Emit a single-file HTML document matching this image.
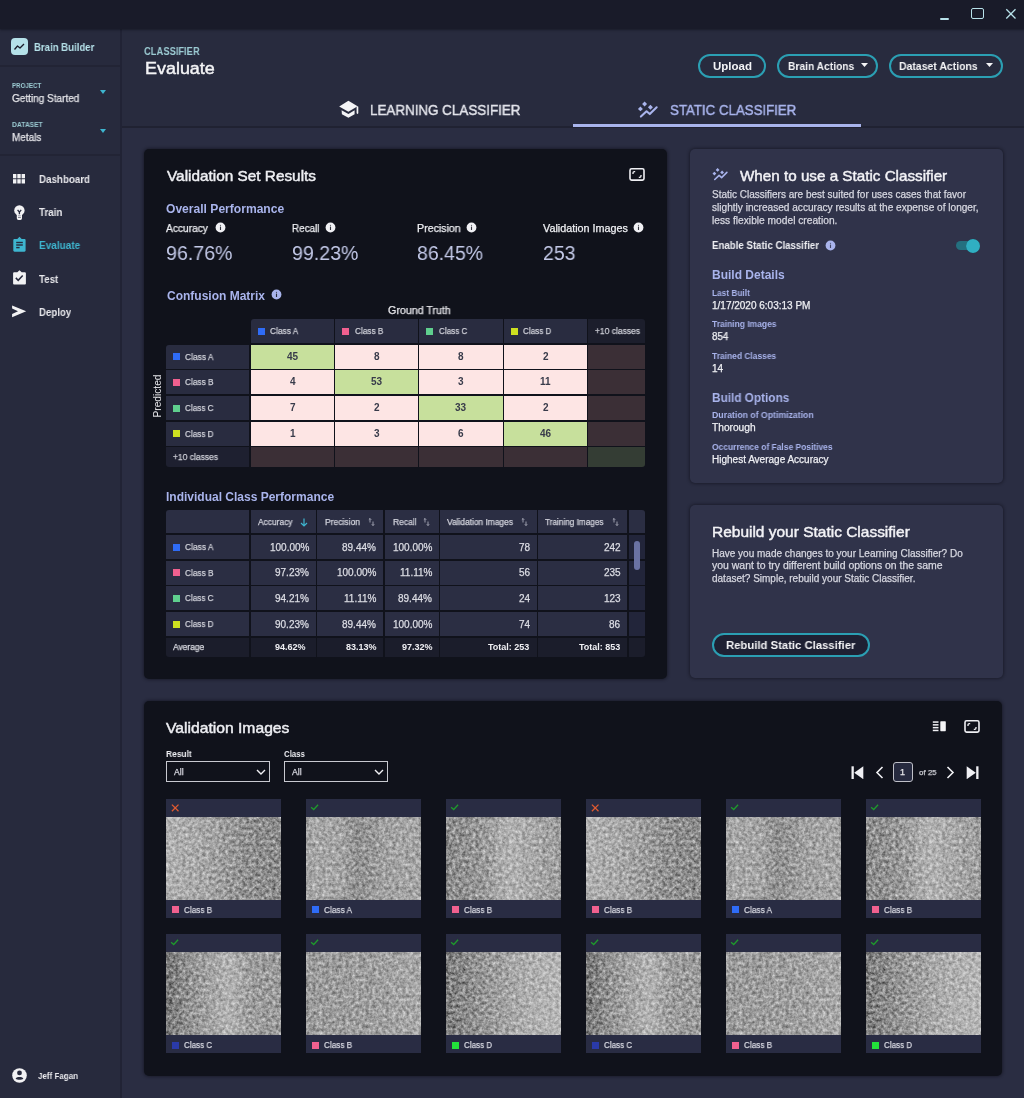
<!DOCTYPE html>
<html><head><meta charset="utf-8">
<style>
*{margin:0;padding:0;box-sizing:border-box}
html,body{width:1024px;height:1098px;overflow:hidden;background:#2a2d42}
body{position:relative;font-family:"Liberation Sans",sans-serif}
body>div,body>svg{position:absolute}
.t{white-space:nowrap;will-change:transform}
.r{-webkit-text-stroke:0.25px currentColor}
</style></head><body>
<div style="left:0px;top:28px;width:120px;height:1070px;background:#272a3d;"></div>
<div style="left:120px;top:28px;width:2px;height:1070px;background:#212335;"></div>
<div style="left:122px;top:28px;width:902px;height:98px;background:#282b3e;"></div>
<div style="left:122px;top:126px;width:902px;height:972px;background:#2a2d42;"></div>
<div style="left:122px;top:126px;width:902px;height:1.6px;background:#202232;"></div>
<div style="left:0px;top:0px;width:1024px;height:28.5px;background:#191b29;box-shadow:0 0 2px 0.5px rgba(10,12,20,0.5);"></div>
<div style="left:0px;top:65px;width:120px;height:2px;background:#222435;"></div>
<div style="left:0px;top:154px;width:120px;height:2px;background:#222435;"></div>
<div style="left:940.2px;top:18.2px;width:8.6px;height:1.6px;background:#b8e2ea;border-radius:1px;"></div>
<div style="left:971.3px;top:8.1px;width:12.4px;height:11.3px;background:transparent;border:1.4px solid #b8e2ea;border-radius:2px;"></div>
<svg style="left:1005px;top:8px;" width="12" height="12" viewBox="0 0 12 12"><path d="M1.3 1.3L10.5 10.5M10.5 1.3L1.3 10.5" stroke="#b8e2ea" stroke-width="1.3"/></svg>
<div style="left:11px;top:38px;width:17px;height:17px;background:#b5e1e9;border-radius:4px;"></div>
<svg style="left:11px;top:38px;" width="17" height="17" viewBox="0 0 17 17"><path d="M3.5 11.5L6.5 8L9 10L13 6" fill="none" stroke="#1a1c2a" stroke-width="1.3" stroke-linejoin="round"/></svg>
<div class="t" style="left:34.00px;top:42.07px;font-size:10.9px;line-height:10.9px;color:#b5e1e9;font-weight:700;transform:scaleX(0.8817);transform-origin:left;">Brain Builder</div>
<div class="t" style="left:11.70px;top:82.96px;font-size:6.9px;line-height:6.9px;color:#9ccbd3;font-weight:700;transform:scaleX(0.9002);transform-origin:left;">PROJECT</div>
<div class="t r" style="left:11.70px;top:93.03px;font-size:10.6px;line-height:10.6px;color:#e6e6ea;font-weight:400;transform:scaleX(0.9458);transform-origin:left;">Getting Started</div>
<svg style="left:100px;top:90px;" width="6" height="4.5" viewBox="0 0 6 4.5"><path d="M0 0H6L3 4Z" fill="#3eb5cf"/></svg>
<div class="t" style="left:11.70px;top:121.66px;font-size:6.9px;line-height:6.9px;color:#9ccbd3;font-weight:700;transform:scaleX(0.9741);transform-origin:left;">DATASET</div>
<div class="t r" style="left:11.70px;top:131.53px;font-size:10.6px;line-height:10.6px;color:#e6e6ea;font-weight:400;transform:scaleX(0.9390);transform-origin:left;">Metals</div>
<svg style="left:100px;top:129px;" width="6" height="4.5" viewBox="0 0 6 4.5"><path d="M0 0H6L3 4Z" fill="#3eb5cf"/></svg>
<div class="t" style="left:39.00px;top:173.94px;font-size:10.7px;line-height:10.7px;color:#e8e8ec;font-weight:700;transform:scaleX(0.9135);transform-origin:left;">Dashboard</div>
<div class="t" style="left:39.00px;top:207.14px;font-size:10.7px;line-height:10.7px;color:#e8e8ec;font-weight:700;transform:scaleX(0.9160);transform-origin:left;">Train</div>
<div class="t" style="left:39.00px;top:240.34px;font-size:10.7px;line-height:10.7px;color:#3eb5cf;font-weight:700;transform:scaleX(0.9370);transform-origin:left;">Evaluate</div>
<div class="t" style="left:39.00px;top:273.84px;font-size:10.7px;line-height:10.7px;color:#e8e8ec;font-weight:700;transform:scaleX(0.9109);transform-origin:left;">Test</div>
<div class="t" style="left:39.00px;top:306.94px;font-size:10.7px;line-height:10.7px;color:#e8e8ec;font-weight:700;transform:scaleX(0.9007);transform-origin:left;">Deploy</div>
<svg style="left:13px;top:174px;" width="13" height="10" viewBox="0 0 13 10"><rect x="0.0" y="0.0" width="3.4" height="4.3" fill="#f2f2f4"/><rect x="4.3" y="0.0" width="3.4" height="4.3" fill="#f2f2f4"/><rect x="8.6" y="0.0" width="3.4" height="4.3" fill="#f2f2f4"/><rect x="0.0" y="5.2" width="3.4" height="4.3" fill="#f2f2f4"/><rect x="4.3" y="5.2" width="3.4" height="4.3" fill="#f2f2f4"/><rect x="8.6" y="5.2" width="3.4" height="4.3" fill="#f2f2f4"/></svg>
<svg style="left:13px;top:204.7px;" width="13" height="16" viewBox="0 0 13 16"><circle cx="6.4" cy="5.4" r="5.2" fill="#f2f2f4"/><path d="M3.2 8.6H9.6L9 10V13.3Q9 14.9 7.4 14.9H5.4Q3.8 14.9 3.8 13.3V10Z" fill="#f2f2f4"/><path d="M4.6 4.9L6.4 7.1L8.2 4.9M6.4 7.1V9.3" stroke="#272a3d" stroke-width="1.3" fill="none"/><rect x="5" y="10.4" width="2.8" height="0.7" fill="#8a8c99"/><rect x="5" y="11.9" width="2.8" height="0.9" fill="#6a6c79"/></svg>
<svg style="left:12px;top:235px;" width="16" height="18" viewBox="0 0 16 18"><path d="M2.5 4H5.3L7.5 1.8L9.7 4H12.5C13.1 4 13.6 4.5 13.6 5.1V15.6C13.6 16.2 13.1 16.7 12.5 16.7H2.5C1.9 16.7 1.3 16.2 1.3 15.6V5.1C1.3 4.5 1.9 4 2.5 4Z" fill="#3eb5cf"/><rect x="4.2" y="6.8" width="6.6" height="1.4" fill="#272a3d"/><rect x="4.2" y="9.3" width="6.6" height="1.4" fill="#272a3d"/><rect x="4.2" y="11.9" width="3.4" height="1.4" fill="#272a3d"/></svg>
<svg style="left:12px;top:269px;" width="16" height="18" viewBox="0 0 16 18"><path d="M2.3 3.2H5.3L7.5 1.2L9.7 3.2H12.7C13.3 3.2 13.9 3.7 13.9 4.3V14.4C13.9 15 13.3 15.5 12.7 15.5H2.3C1.7 15.5 1.1 15 1.1 14.4V4.3C1.1 3.7 1.7 3.2 2.3 3.2Z" fill="#f2f2f4"/><path d="M3.8 8.9L6.2 11.3L10.7 6.4" stroke="#272a3d" stroke-width="1.5" fill="none"/></svg>
<svg style="left:11px;top:304px;" width="16" height="14" viewBox="0 0 16 14"><path d="M1.1 1.6L15.2 7.2L1.1 13.2V9.9L7 7.2L1.1 4.6Z" fill="#f2f2f4"/></svg>
<svg style="left:12px;top:1068px;" width="15" height="15" viewBox="0 0 15 15"><circle cx="7.5" cy="7.5" r="7.3" fill="#f2f2f4"/><circle cx="7.5" cy="4.9" r="2.4" fill="#282b3e"/><path d="M3.6 10.4C4.6 9.3 5.9 9 7.5 9C9.1 9 10.4 9.3 11.4 10.4C10.4 11.5 9.1 11.8 7.5 11.8C5.9 11.8 4.6 11.5 3.6 10.4Z" fill="#282b3e"/></svg>
<div class="t" style="left:38.10px;top:1070.71px;font-size:9.5px;line-height:9.5px;color:#e8e8ec;font-weight:700;transform:scaleX(0.8418);transform-origin:left;">Jeff Fagan</div>
<div class="t" style="left:144.00px;top:45.57px;font-size:10.9px;line-height:10.9px;color:#9ccbd3;font-weight:700;transform:scaleX(0.8602);transform-origin:left;">CLASSIFIER</div>
<div class="t r" style="left:144.60px;top:60.44px;font-size:17.2px;line-height:17.2px;color:#f4f4f6;font-weight:400;transform:scaleX(1.0435);transform-origin:left;-webkit-text-stroke:0.45px currentColor;">Evaluate</div>
<div style="left:698px;top:54px;width:68px;height:24px;background:transparent;border:2px solid #2b9fb3;border-radius:12.0px;"></div>
<div class="t" style="left:712.50px;top:60.65px;font-size:11.4px;line-height:11.4px;color:#f4f4f6;font-weight:700;transform:scaleX(1.0101);transform-origin:left;">Upload</div>
<div style="left:777px;top:54px;width:101px;height:24px;background:transparent;border:2px solid #2b9fb3;border-radius:12.0px;"></div>
<div class="t" style="left:787.50px;top:60.65px;font-size:11.4px;line-height:11.4px;color:#f4f4f6;font-weight:700;transform:scaleX(0.8996);transform-origin:left;">Brain Actions</div>
<svg style="left:861px;top:63.3px;" width="7" height="4.5" viewBox="0 0 7 4.5"><path d="M0 0H7L3.5 4Z" fill="#f4f4f6"/></svg>
<div style="left:889px;top:54px;width:114px;height:24px;background:transparent;border:2px solid #2b9fb3;border-radius:12.0px;"></div>
<div class="t" style="left:899.40px;top:60.65px;font-size:11.4px;line-height:11.4px;color:#f4f4f6;font-weight:700;transform:scaleX(0.9186);transform-origin:left;">Dataset Actions</div>
<svg style="left:986px;top:63.3px;" width="7" height="4.5" viewBox="0 0 7 4.5"><path d="M0 0H7L3.5 4Z" fill="#f4f4f6"/></svg>
<div style="left:573px;top:124px;width:288px;height:3px;background:#a9b4ec;"></div>
<div class="t r" style="left:370.30px;top:102.33px;font-size:15.2px;line-height:15.2px;color:#e2e3ea;font-weight:400;transform:scaleX(0.8822);transform-origin:left;-webkit-text-stroke:0.45px currentColor;">LEARNING CLASSIFIER</div>
<svg style="left:334px;top:96px;" width="28" height="24" viewBox="0 0 28 24"><path d="M14.4 4.7L23.6 10.3L14.4 15.7L5.2 10.4Z" fill="#f4f4f6"/><rect x="22.6" y="10.3" width="1.7" height="7.6" rx="0.8" fill="#f4f4f6"/><path d="M7.6 14.3L14.4 18.1L20.6 14.3V18.3L14.4 21.7L7.9 18.3Z" fill="#f4f4f6"/></svg>
<div class="t r" style="left:670.40px;top:102.33px;font-size:15.2px;line-height:15.2px;color:#a9b4ec;font-weight:400;transform:scaleX(0.8735);transform-origin:left;-webkit-text-stroke:0.45px currentColor;">STATIC CLASSIFIER</div>
<svg style="left:636.2px;top:98.6px;" width="28" height="24" viewBox="0 0 28 24"><g transform="scale(1.3)"><path d="M3.75 13.5L8.1 9.4L10.6 11.6L15.9 6.4" fill="none" stroke="#a9b4ec" stroke-width="1.6" stroke-linecap="round" stroke-linejoin="round"/><path d="M3.4 5.699999999999999L5.3 7.6L3.4 9.5L1.5 7.6ZM6.6 2.0L8.5 3.9L6.6 5.8L4.699999999999999 3.9ZM11.1 4.5L13.0 6.4L11.1 8.3L9.2 6.4Z" fill="#a9b4ec"/></g></svg>
<div style="left:144px;top:149px;width:523px;height:530px;background:#10121b;border-radius:5px;box-shadow:0 0 3px 1px rgba(10,12,20,0.45);"></div>
<div style="left:690px;top:149px;width:313px;height:334px;background:#30334a;border-radius:5px;box-shadow:0 0 3px 1px rgba(10,12,20,0.45);"></div>
<div style="left:690px;top:505px;width:313px;height:173px;background:#30334a;border-radius:5px;box-shadow:0 0 3px 1px rgba(10,12,20,0.45);"></div>
<div style="left:144px;top:701px;width:858px;height:375px;background:#10121b;border-radius:5px;box-shadow:0 0 3px 1px rgba(10,12,20,0.45);"></div>
<div class="t r" style="left:166.80px;top:169.01px;font-size:14.4px;line-height:14.4px;color:#eeeff3;font-weight:400;transform:scaleX(1.0664);transform-origin:left;-webkit-text-stroke:0.45px currentColor;">Validation Set Results</div>
<svg style="left:628px;top:167px;" width="18" height="16" viewBox="0 0 18 16"><rect x="2" y="1.8" width="14" height="11.3" rx="1.6" fill="none" stroke="#f0f0f4" stroke-width="1.6"/><path d="M5 7V5.8Q5 4.6 6.4 4.6H7.2M13 7.9V9.1Q13 10.3 11.6 10.3H10.8" fill="none" stroke="#f0f0f4" stroke-width="1.3"/></svg>
<div class="t" style="left:166.40px;top:203.14px;font-size:12px;line-height:12px;color:#a9b4ec;font-weight:700;transform:scaleX(1.0068);transform-origin:left;">Overall Performance</div>
<div class="t r" style="left:166.40px;top:222.69px;font-size:10.7px;line-height:10.7px;color:#eeeff3;font-weight:400;transform:scaleX(0.9556);transform-origin:left;">Accuracy</div>
<svg style="left:214.7px;top:222.10000000000002px;" width="12" height="12" viewBox="0 0 12 12"><circle cx="5.5" cy="5.5" r="4.9" fill="#f0f0f4"/><rect x="4.95" y="4.6" width="1.1" height="3.4" rx="0.3" fill="#10121b" opacity="0.85"/><circle cx="5.5" cy="3.3" r="0.6" fill="#10121b" opacity="0.7"/></svg>
<div class="t" style="left:166.40px;top:242.75px;font-size:20.5px;line-height:20.5px;color:#c3c9e8;font-weight:400;transform:scaleX(0.9564);transform-origin:left;">96.76%</div>
<div class="t r" style="left:291.80px;top:222.69px;font-size:10.7px;line-height:10.7px;color:#eeeff3;font-weight:400;transform:scaleX(0.9225);transform-origin:left;">Recall</div>
<svg style="left:325px;top:222.10000000000002px;" width="12" height="12" viewBox="0 0 12 12"><circle cx="5.5" cy="5.5" r="4.9" fill="#f0f0f4"/><rect x="4.95" y="4.6" width="1.1" height="3.4" rx="0.3" fill="#10121b" opacity="0.85"/><circle cx="5.5" cy="3.3" r="0.6" fill="#10121b" opacity="0.7"/></svg>
<div class="t" style="left:291.80px;top:242.75px;font-size:20.5px;line-height:20.5px;color:#c3c9e8;font-weight:400;transform:scaleX(0.9550);transform-origin:left;">99.23%</div>
<div class="t r" style="left:417.30px;top:222.69px;font-size:10.7px;line-height:10.7px;color:#eeeff3;font-weight:400;transform:scaleX(0.9916);transform-origin:left;">Precision</div>
<svg style="left:466.3px;top:222.10000000000002px;" width="12" height="12" viewBox="0 0 12 12"><circle cx="5.5" cy="5.5" r="4.9" fill="#f0f0f4"/><rect x="4.95" y="4.6" width="1.1" height="3.4" rx="0.3" fill="#10121b" opacity="0.85"/><circle cx="5.5" cy="3.3" r="0.6" fill="#10121b" opacity="0.7"/></svg>
<div class="t" style="left:417.30px;top:242.75px;font-size:20.5px;line-height:20.5px;color:#c3c9e8;font-weight:400;transform:scaleX(0.9492);transform-origin:left;">86.45%</div>
<div class="t r" style="left:542.70px;top:222.69px;font-size:10.7px;line-height:10.7px;color:#eeeff3;font-weight:400;transform:scaleX(1.0098);transform-origin:left;">Validation Images</div>
<svg style="left:633.1px;top:222.10000000000002px;" width="12" height="12" viewBox="0 0 12 12"><circle cx="5.5" cy="5.5" r="4.9" fill="#f0f0f4"/><rect x="4.95" y="4.6" width="1.1" height="3.4" rx="0.3" fill="#10121b" opacity="0.85"/><circle cx="5.5" cy="3.3" r="0.6" fill="#10121b" opacity="0.7"/></svg>
<div class="t" style="left:542.70px;top:242.75px;font-size:20.5px;line-height:20.5px;color:#c3c9e8;font-weight:400;transform:scaleX(0.9498);transform-origin:left;">253</div>
<div class="t" style="left:166.80px;top:289.54px;font-size:12px;line-height:12px;color:#a9b4ec;font-weight:700;">Confusion Matrix</div>
<svg style="left:270.7px;top:289.1px;" width="12" height="12" viewBox="0 0 12 12"><circle cx="5.5" cy="5.5" r="4.9" fill="#a9b4ec"/><rect x="4.95" y="4.6" width="1.1" height="3.4" rx="0.3" fill="#10121b" opacity="0.85"/><circle cx="5.5" cy="3.3" r="0.6" fill="#10121b" opacity="0.7"/></svg>
<div class="t r" style="left:387.80px;top:304.96px;font-size:10.8px;line-height:10.8px;color:#e6e6ea;font-weight:400;transform:scaleX(0.9886);transform-origin:left;">Ground Truth</div>
<div class="t" style="left:133.5px;top:389.5px;width:48px;height:12px;font-size:10.2px;line-height:12px;color:#e6e6ea;transform:rotate(-90deg);text-align:center">Predicted</div>
<div style="left:251px;top:319.3px;width:83px;height:24px;background:#292c40;border-radius:3px 0 0 0;"></div>
<div style="left:258px;top:328.4px;width:7px;height:6.8px;background:#2f6cf6;"></div>
<div class="t r" style="left:270.30px;top:327.01px;font-size:9.2px;line-height:9.2px;color:#cfd0d8;font-weight:400;transform:scaleX(0.9083);transform-origin:left;">Class A</div>
<div style="left:335.2px;top:319.3px;width:83.0px;height:24px;background:#292c40;"></div>
<div style="left:342.2px;top:328.4px;width:7px;height:6.8px;background:#f0608f;"></div>
<div class="t r" style="left:354.50px;top:327.01px;font-size:9.2px;line-height:9.2px;color:#cfd0d8;font-weight:400;transform:scaleX(0.8940);transform-origin:left;">Class B</div>
<div style="left:419.3px;top:319.3px;width:83.5px;height:24px;background:#292c40;"></div>
<div style="left:426.3px;top:328.4px;width:7px;height:6.8px;background:#5fcf8e;"></div>
<div class="t r" style="left:438.60px;top:327.01px;font-size:9.2px;line-height:9.2px;color:#cfd0d8;font-weight:400;transform:scaleX(0.8797);transform-origin:left;">Class C</div>
<div style="left:504.1px;top:319.3px;width:82.89999999999998px;height:24px;background:#292c40;"></div>
<div style="left:511.1px;top:328.4px;width:7px;height:6.8px;background:#cde020;"></div>
<div class="t r" style="left:523.40px;top:327.01px;font-size:9.2px;line-height:9.2px;color:#cfd0d8;font-weight:400;transform:scaleX(0.8797);transform-origin:left;">Class D</div>
<div style="left:588.3px;top:319.3px;width:57.1px;height:24px;background:#1c1e2c;border-radius:0 3px 0 0;"></div>
<div class="t r" style="left:594.80px;top:327.01px;font-size:9.2px;line-height:9.2px;color:#cfd0d8;font-weight:400;transform:scaleX(0.9225);transform-origin:left;">+10 classes</div>
<div style="left:166.3px;top:344.9px;width:82.5px;height:24.1px;background:#292c40;border-radius:3px 0 0 0;"></div>
<div style="left:172.9px;top:353.4px;width:7.2px;height:7px;background:#2f6cf6;"></div>
<div class="t r" style="left:185.30px;top:352.71px;font-size:9.2px;line-height:9.2px;color:#cfd0d8;font-weight:400;transform:scaleX(0.9147);transform-origin:left;">Class A</div>
<div style="left:251px;top:344.9px;width:83px;height:24.1px;background:#c7e09c;"></div>
<div class="t" style="left:286.94px;top:351.94px;font-size:10px;line-height:10px;color:#383b4a;font-weight:700;">45</div>
<div style="left:335.2px;top:344.9px;width:83.0px;height:24.1px;background:#fde5e4;"></div>
<div class="t" style="left:373.92px;top:351.94px;font-size:10px;line-height:10px;color:#383b4a;font-weight:700;">8</div>
<div style="left:419.3px;top:344.9px;width:83.5px;height:24.1px;background:#fde5e4;"></div>
<div class="t" style="left:458.27px;top:351.94px;font-size:10px;line-height:10px;color:#383b4a;font-weight:700;">8</div>
<div style="left:504.1px;top:344.9px;width:82.89999999999998px;height:24.1px;background:#fde5e4;"></div>
<div class="t" style="left:542.77px;top:351.94px;font-size:10px;line-height:10px;color:#383b4a;font-weight:700;">2</div>
<div style="left:588.3px;top:344.9px;width:57.1px;height:24.1px;background:#3b2f36;"></div>
<div style="left:166.3px;top:370.4px;width:82.5px;height:24.1px;background:#292c40;"></div>
<div style="left:172.9px;top:378.9px;width:7.2px;height:7px;background:#f0608f;"></div>
<div class="t r" style="left:185.30px;top:378.21px;font-size:9.2px;line-height:9.2px;color:#cfd0d8;font-weight:400;transform:scaleX(0.9003);transform-origin:left;">Class B</div>
<div style="left:251px;top:370.4px;width:83px;height:24.1px;background:#fde5e4;"></div>
<div class="t" style="left:289.72px;top:377.44px;font-size:10px;line-height:10px;color:#383b4a;font-weight:700;">4</div>
<div style="left:335.2px;top:370.4px;width:83.0px;height:24.1px;background:#c7e09c;"></div>
<div class="t" style="left:371.14px;top:377.44px;font-size:10px;line-height:10px;color:#383b4a;font-weight:700;">53</div>
<div style="left:419.3px;top:370.4px;width:83.5px;height:24.1px;background:#fde5e4;"></div>
<div class="t" style="left:458.27px;top:377.44px;font-size:10px;line-height:10px;color:#383b4a;font-weight:700;">3</div>
<div style="left:504.1px;top:370.4px;width:82.89999999999998px;height:24.1px;background:#fde5e4;"></div>
<div class="t" style="left:540.26px;top:377.44px;font-size:10px;line-height:10px;color:#383b4a;font-weight:700;">11</div>
<div style="left:588.3px;top:370.4px;width:57.1px;height:24.1px;background:#3b2f36;"></div>
<div style="left:166.3px;top:396px;width:82.5px;height:24.1px;background:#292c40;"></div>
<div style="left:172.9px;top:404.5px;width:7.2px;height:7px;background:#5fcf8e;"></div>
<div class="t r" style="left:185.30px;top:403.81px;font-size:9.2px;line-height:9.2px;color:#cfd0d8;font-weight:400;transform:scaleX(0.8859);transform-origin:left;">Class C</div>
<div style="left:251px;top:396px;width:83px;height:24.1px;background:#fde5e4;"></div>
<div class="t" style="left:289.72px;top:403.04px;font-size:10px;line-height:10px;color:#383b4a;font-weight:700;">7</div>
<div style="left:335.2px;top:396px;width:83.0px;height:24.1px;background:#fde5e4;"></div>
<div class="t" style="left:373.92px;top:403.04px;font-size:10px;line-height:10px;color:#383b4a;font-weight:700;">2</div>
<div style="left:419.3px;top:396px;width:83.5px;height:24.1px;background:#c7e09c;"></div>
<div class="t" style="left:455.49px;top:403.04px;font-size:10px;line-height:10px;color:#383b4a;font-weight:700;">33</div>
<div style="left:504.1px;top:396px;width:82.89999999999998px;height:24.1px;background:#fde5e4;"></div>
<div class="t" style="left:542.77px;top:403.04px;font-size:10px;line-height:10px;color:#383b4a;font-weight:700;">2</div>
<div style="left:588.3px;top:396px;width:57.1px;height:24.1px;background:#3b2f36;"></div>
<div style="left:166.3px;top:421.8px;width:82.5px;height:24.1px;background:#292c40;"></div>
<div style="left:172.9px;top:430.3px;width:7.2px;height:7px;background:#cde020;"></div>
<div class="t r" style="left:185.30px;top:429.61px;font-size:9.2px;line-height:9.2px;color:#cfd0d8;font-weight:400;transform:scaleX(0.8859);transform-origin:left;">Class D</div>
<div style="left:251px;top:421.8px;width:83px;height:24.1px;background:#fde5e4;"></div>
<div class="t" style="left:289.72px;top:428.84px;font-size:10px;line-height:10px;color:#383b4a;font-weight:700;">1</div>
<div style="left:335.2px;top:421.8px;width:83.0px;height:24.1px;background:#fde5e4;"></div>
<div class="t" style="left:373.92px;top:428.84px;font-size:10px;line-height:10px;color:#383b4a;font-weight:700;">3</div>
<div style="left:419.3px;top:421.8px;width:83.5px;height:24.1px;background:#fde5e4;"></div>
<div class="t" style="left:458.27px;top:428.84px;font-size:10px;line-height:10px;color:#383b4a;font-weight:700;">6</div>
<div style="left:504.1px;top:421.8px;width:82.89999999999998px;height:24.1px;background:#c7e09c;"></div>
<div class="t" style="left:539.99px;top:428.84px;font-size:10px;line-height:10px;color:#383b4a;font-weight:700;">46</div>
<div style="left:588.3px;top:421.8px;width:57.1px;height:24.1px;background:#3b2f36;"></div>
<div style="left:166.3px;top:447.4px;width:82.5px;height:20px;background:#1e2030;border-radius:0 0 0 3px;"></div>
<div class="t r" style="left:173.20px;top:452.51px;font-size:9.2px;line-height:9.2px;color:#cfd0d8;font-weight:400;transform:scaleX(0.9225);transform-origin:left;">+10 classes</div>
<div style="left:251px;top:447.4px;width:83px;height:20px;background:#3b2f36;"></div>
<div style="left:335.2px;top:447.4px;width:83.0px;height:20px;background:#3b2f36;"></div>
<div style="left:419.3px;top:447.4px;width:83.5px;height:20px;background:#3b2f36;"></div>
<div style="left:504.1px;top:447.4px;width:82.89999999999998px;height:20px;background:#3b2f36;"></div>
<div style="left:588.3px;top:447.4px;width:57.1px;height:20px;background:#343d34;border-radius:0 0 3px 0;"></div>
<div class="t" style="left:166.40px;top:490.84px;font-size:12px;line-height:12px;color:#a9b4ec;font-weight:700;">Individual Class Performance</div>
<div style="left:166.3px;top:509.8px;width:82.79999999999998px;height:23.7px;background:#2b2e43;border-radius:3px 0 0 0;"></div>
<div style="left:166.3px;top:534.9px;width:82.79999999999998px;height:24.1px;background:#2b2e43;"></div>
<div style="left:166.3px;top:560.7px;width:82.79999999999998px;height:24.1px;background:#2b2e43;"></div>
<div style="left:166.3px;top:586.4px;width:82.79999999999998px;height:24.1px;background:#2b2e43;"></div>
<div style="left:166.3px;top:612.1px;width:82.79999999999998px;height:24.1px;background:#2b2e43;"></div>
<div style="left:166.3px;top:637.7px;width:82.79999999999998px;height:18.9px;background:#1b1d2b;border-radius:0 0 0 3px;"></div>
<div style="left:251px;top:509.8px;width:64.69999999999999px;height:23.7px;background:#2b2e43;"></div>
<div style="left:251px;top:534.9px;width:64.69999999999999px;height:24.1px;background:#2b2e43;"></div>
<div style="left:251px;top:560.7px;width:64.69999999999999px;height:24.1px;background:#2b2e43;"></div>
<div style="left:251px;top:586.4px;width:64.69999999999999px;height:24.1px;background:#2b2e43;"></div>
<div style="left:251px;top:612.1px;width:64.69999999999999px;height:24.1px;background:#2b2e43;"></div>
<div style="left:251px;top:637.7px;width:64.69999999999999px;height:18.9px;background:#1b1d2b;"></div>
<div style="left:317px;top:509.8px;width:66px;height:23.7px;background:#2b2e43;"></div>
<div style="left:317px;top:534.9px;width:66px;height:24.1px;background:#2b2e43;"></div>
<div style="left:317px;top:560.7px;width:66px;height:24.1px;background:#2b2e43;"></div>
<div style="left:317px;top:586.4px;width:66px;height:24.1px;background:#2b2e43;"></div>
<div style="left:317px;top:612.1px;width:66px;height:24.1px;background:#2b2e43;"></div>
<div style="left:317px;top:637.7px;width:66px;height:18.9px;background:#1b1d2b;"></div>
<div style="left:384.7px;top:509.8px;width:54.30000000000001px;height:23.7px;background:#2b2e43;"></div>
<div style="left:384.7px;top:534.9px;width:54.30000000000001px;height:24.1px;background:#2b2e43;"></div>
<div style="left:384.7px;top:560.7px;width:54.30000000000001px;height:24.1px;background:#2b2e43;"></div>
<div style="left:384.7px;top:586.4px;width:54.30000000000001px;height:24.1px;background:#2b2e43;"></div>
<div style="left:384.7px;top:612.1px;width:54.30000000000001px;height:24.1px;background:#2b2e43;"></div>
<div style="left:384.7px;top:637.7px;width:54.30000000000001px;height:18.9px;background:#1b1d2b;"></div>
<div style="left:440.3px;top:509.8px;width:96.30000000000001px;height:23.7px;background:#2b2e43;"></div>
<div style="left:440.3px;top:534.9px;width:96.30000000000001px;height:24.1px;background:#2b2e43;"></div>
<div style="left:440.3px;top:560.7px;width:96.30000000000001px;height:24.1px;background:#2b2e43;"></div>
<div style="left:440.3px;top:586.4px;width:96.30000000000001px;height:24.1px;background:#2b2e43;"></div>
<div style="left:440.3px;top:612.1px;width:96.30000000000001px;height:24.1px;background:#2b2e43;"></div>
<div style="left:440.3px;top:637.7px;width:96.30000000000001px;height:18.9px;background:#1b1d2b;"></div>
<div style="left:537.9px;top:509.8px;width:89.39999999999998px;height:23.7px;background:#2b2e43;"></div>
<div style="left:537.9px;top:534.9px;width:89.39999999999998px;height:24.1px;background:#2b2e43;"></div>
<div style="left:537.9px;top:560.7px;width:89.39999999999998px;height:24.1px;background:#2b2e43;"></div>
<div style="left:537.9px;top:586.4px;width:89.39999999999998px;height:24.1px;background:#2b2e43;"></div>
<div style="left:537.9px;top:612.1px;width:89.39999999999998px;height:24.1px;background:#2b2e43;"></div>
<div style="left:537.9px;top:637.7px;width:89.39999999999998px;height:18.9px;background:#1b1d2b;"></div>
<div style="left:628.6px;top:509.8px;width:16.600000000000023px;height:23.7px;background:#2b2e43;border-radius:0 3px 0 0;"></div>
<div style="left:628.6px;top:534.9px;width:16.600000000000023px;height:24.1px;background:#22253a;"></div>
<div style="left:628.6px;top:560.7px;width:16.600000000000023px;height:24.1px;background:#22253a;"></div>
<div style="left:628.6px;top:586.4px;width:16.600000000000023px;height:24.1px;background:#22253a;"></div>
<div style="left:628.6px;top:612.1px;width:16.600000000000023px;height:24.1px;background:#22253a;"></div>
<div style="left:628.6px;top:637.7px;width:16.600000000000023px;height:18.9px;background:#1b1d2b;border-radius:0 0 3px 0;"></div>
<div class="t r" style="left:257.70px;top:517.75px;font-size:8.8px;line-height:8.8px;color:#d2d3dc;font-weight:400;transform:scaleX(0.9534);transform-origin:left;">Accuracy</div>
<div class="t r" style="left:324.60px;top:517.75px;font-size:8.8px;line-height:8.8px;color:#d2d3dc;font-weight:400;transform:scaleX(0.9672);transform-origin:left;">Precision</div>
<div class="t r" style="left:392.50px;top:517.75px;font-size:8.8px;line-height:8.8px;color:#d2d3dc;font-weight:400;transform:scaleX(0.9651);transform-origin:left;">Recall</div>
<div class="t r" style="left:446.90px;top:517.75px;font-size:8.8px;line-height:8.8px;color:#d2d3dc;font-weight:400;transform:scaleX(0.9512);transform-origin:left;">Validation Images</div>
<div class="t r" style="left:545.00px;top:517.75px;font-size:8.8px;line-height:8.8px;color:#d2d3dc;font-weight:400;transform:scaleX(0.9323);transform-origin:left;">Training Images</div>
<svg style="left:299.8px;top:517.7px;" width="8" height="9" viewBox="0 0 8 9"><path d="M4 0.5V8M1 5L4 8L7 5" fill="none" stroke="#3eb5cf" stroke-width="1.2"/></svg>
<svg style="left:368.3px;top:518.3px;" width="7" height="8" viewBox="0 0 7 8"><path d="M2 0.5V4.5M0.8 1.7L2 0.5L3.2 1.7M5 3.5V7.5M3.8 6.3L5 7.5L6.2 6.3" fill="none" stroke="#b8bac8" stroke-width="0.8"/></svg>
<svg style="left:423.2px;top:518.3px;" width="7" height="8" viewBox="0 0 7 8"><path d="M2 0.5V4.5M0.8 1.7L2 0.5L3.2 1.7M5 3.5V7.5M3.8 6.3L5 7.5L6.2 6.3" fill="none" stroke="#b8bac8" stroke-width="0.8"/></svg>
<svg style="left:521.3px;top:518.3px;" width="7" height="8" viewBox="0 0 7 8"><path d="M2 0.5V4.5M0.8 1.7L2 0.5L3.2 1.7M5 3.5V7.5M3.8 6.3L5 7.5L6.2 6.3" fill="none" stroke="#b8bac8" stroke-width="0.8"/></svg>
<svg style="left:612.2px;top:518.3px;" width="7" height="8" viewBox="0 0 7 8"><path d="M2 0.5V4.5M0.8 1.7L2 0.5L3.2 1.7M5 3.5V7.5M3.8 6.3L5 7.5L6.2 6.3" fill="none" stroke="#b8bac8" stroke-width="0.8"/></svg>
<div style="left:172.9px;top:543.5px;width:7.2px;height:7px;background:#2f6cf6;"></div>
<div class="t r" style="left:185.30px;top:542.91px;font-size:9.2px;line-height:9.2px;color:#cfd0d8;font-weight:400;transform:scaleX(0.9147);transform-origin:left;">Class A</div>
<div class="t r" style="left:269.52px;top:542.53px;font-size:10px;line-height:10px;color:#dcdde4;font-weight:400;">100.00%</div>
<div class="t r" style="left:342.38px;top:542.53px;font-size:10px;line-height:10px;color:#dcdde4;font-weight:400;">89.44%</div>
<div class="t r" style="left:392.82px;top:542.53px;font-size:10px;line-height:10px;color:#dcdde4;font-weight:400;">100.00%</div>
<div class="t r" style="left:518.77px;top:542.53px;font-size:10px;line-height:10px;color:#dcdde4;font-weight:400;">78</div>
<div class="t r" style="left:603.91px;top:542.53px;font-size:10px;line-height:10px;color:#dcdde4;font-weight:400;">242</div>
<div style="left:172.9px;top:569.3000000000001px;width:7.2px;height:7px;background:#f0608f;"></div>
<div class="t r" style="left:185.30px;top:568.71px;font-size:9.2px;line-height:9.2px;color:#cfd0d8;font-weight:400;transform:scaleX(0.9003);transform-origin:left;">Class B</div>
<div class="t r" style="left:275.08px;top:568.34px;font-size:10px;line-height:10px;color:#dcdde4;font-weight:400;">97.23%</div>
<div class="t r" style="left:336.82px;top:568.34px;font-size:10px;line-height:10px;color:#dcdde4;font-weight:400;">100.00%</div>
<div class="t r" style="left:399.86px;top:568.34px;font-size:10px;line-height:10px;color:#dcdde4;font-weight:400;">11.11%</div>
<div class="t r" style="left:518.77px;top:568.34px;font-size:10px;line-height:10px;color:#dcdde4;font-weight:400;">56</div>
<div class="t r" style="left:603.91px;top:568.34px;font-size:10px;line-height:10px;color:#dcdde4;font-weight:400;">235</div>
<div style="left:172.9px;top:595.0px;width:7.2px;height:7px;background:#5fcf8e;"></div>
<div class="t r" style="left:185.30px;top:594.41px;font-size:9.2px;line-height:9.2px;color:#cfd0d8;font-weight:400;transform:scaleX(0.8859);transform-origin:left;">Class C</div>
<div class="t r" style="left:275.08px;top:594.03px;font-size:10px;line-height:10px;color:#dcdde4;font-weight:400;">94.21%</div>
<div class="t r" style="left:343.86px;top:594.03px;font-size:10px;line-height:10px;color:#dcdde4;font-weight:400;">11.11%</div>
<div class="t r" style="left:398.38px;top:594.03px;font-size:10px;line-height:10px;color:#dcdde4;font-weight:400;">89.44%</div>
<div class="t r" style="left:518.77px;top:594.03px;font-size:10px;line-height:10px;color:#dcdde4;font-weight:400;">24</div>
<div class="t r" style="left:603.91px;top:594.03px;font-size:10px;line-height:10px;color:#dcdde4;font-weight:400;">123</div>
<div style="left:172.9px;top:620.7px;width:7.2px;height:7px;background:#cde020;"></div>
<div class="t r" style="left:185.30px;top:620.11px;font-size:9.2px;line-height:9.2px;color:#cfd0d8;font-weight:400;transform:scaleX(0.8859);transform-origin:left;">Class D</div>
<div class="t r" style="left:275.08px;top:619.74px;font-size:10px;line-height:10px;color:#dcdde4;font-weight:400;">90.23%</div>
<div class="t r" style="left:342.38px;top:619.74px;font-size:10px;line-height:10px;color:#dcdde4;font-weight:400;">89.44%</div>
<div class="t r" style="left:392.82px;top:619.74px;font-size:10px;line-height:10px;color:#dcdde4;font-weight:400;">100.00%</div>
<div class="t r" style="left:518.77px;top:619.74px;font-size:10px;line-height:10px;color:#dcdde4;font-weight:400;">74</div>
<div class="t r" style="left:609.47px;top:619.74px;font-size:10px;line-height:10px;color:#dcdde4;font-weight:400;">86</div>
<div class="t r" style="left:172.80px;top:642.58px;font-size:9px;line-height:9px;color:#dcdde4;font-weight:400;transform:scaleX(0.9383);transform-origin:left;">Average</div>
<div class="t" style="left:274.67px;top:642.58px;font-size:9px;line-height:9px;color:#f0f0f4;font-weight:700;">94.62%</div>
<div class="t" style="left:345.77px;top:642.58px;font-size:9px;line-height:9px;color:#f0f0f4;font-weight:700;">83.13%</div>
<div class="t" style="left:401.67px;top:642.58px;font-size:9px;line-height:9px;color:#f0f0f4;font-weight:700;">97.32%</div>
<div class="t" style="left:488.36px;top:642.58px;font-size:9px;line-height:9px;color:#f0f0f4;font-weight:700;">Total: 253</div>
<div class="t" style="left:578.76px;top:642.58px;font-size:9px;line-height:9px;color:#f0f0f4;font-weight:700;">Total: 853</div>
<div style="left:634.1px;top:540.6px;width:5.9px;height:29.8px;background:#6a72a3;border-radius:3px;"></div>
<svg style="left:711px;top:166px;" width="22" height="19" viewBox="0 0 22 19"><g transform="scale(1.0)"><path d="M3.75 13.5L8.1 9.4L10.6 11.6L15.9 6.4" fill="none" stroke="#a9b4ec" stroke-width="1.6" stroke-linecap="round" stroke-linejoin="round"/><path d="M3.4 5.699999999999999L5.3 7.6L3.4 9.5L1.5 7.6ZM6.6 2.0L8.5 3.9L6.6 5.8L4.699999999999999 3.9ZM11.1 4.5L13.0 6.4L11.1 8.3L9.2 6.4Z" fill="#a9b4ec"/></g></svg>
<div class="t r" style="left:739.80px;top:167.60px;font-size:15px;line-height:15px;color:#f2f2f6;font-weight:400;transform:scaleX(1.0144);transform-origin:left;-webkit-text-stroke:0.45px currentColor;">When to use a Static Classifier</div>
<div class="t r" style="left:711.70px;top:190.34px;font-size:10px;line-height:10px;color:#d6d7e0;font-weight:400;">Static Classifiers are best suited for uses cases that favor</div>
<div class="t r" style="left:711.70px;top:203.24px;font-size:10px;line-height:10px;color:#d6d7e0;font-weight:400;transform:scaleX(1.0097);transform-origin:left;">slightly increased accuracy results at the expense of longer,</div>
<div class="t r" style="left:711.70px;top:216.14px;font-size:10px;line-height:10px;color:#d6d7e0;font-weight:400;transform:scaleX(1.0208);transform-origin:left;">less flexible model creation.</div>
<div class="t" style="left:711.70px;top:241.40px;font-size:10.4px;line-height:10.4px;color:#eeeff3;font-weight:700;transform:scaleX(0.9311);transform-origin:left;">Enable Static Classifier</div>
<svg style="left:825px;top:239.8px;" width="12" height="12" viewBox="0 0 12 12"><circle cx="5.5" cy="5.5" r="4.9" fill="#a9b4ec"/><rect x="4.95" y="4.6" width="1.1" height="3.4" rx="0.3" fill="#30334a" opacity="0.85"/><circle cx="5.5" cy="3.3" r="0.6" fill="#30334a" opacity="0.7"/></svg>
<div style="left:955.8px;top:240.5px;width:24px;height:9.7px;background:#24707f;border-radius:5px;"></div>
<svg style="left:965.4px;top:237.7px;filter:drop-shadow(0 0.5px 0.6px rgba(0,0,0,0.5));" width="16" height="16" viewBox="0 0 16 16"><circle cx="8" cy="8" r="7" fill="#30afc2"/></svg>
<div class="t" style="left:712.00px;top:269.24px;font-size:12px;line-height:12px;color:#a9b4ec;font-weight:700;transform:scaleX(0.9933);transform-origin:left;">Build Details</div>
<div class="t" style="left:712.00px;top:288.75px;font-size:8.8px;line-height:8.8px;color:#a9b4ec;font-weight:700;transform:scaleX(0.9432);transform-origin:left;">Last Built</div>
<div class="t r" style="left:712.00px;top:300.54px;font-size:10px;line-height:10px;color:#eeeff3;font-weight:400;">1/17/2020 6:03:13 PM</div>
<div class="t" style="left:712.00px;top:320.05px;font-size:8.8px;line-height:8.8px;color:#a9b4ec;font-weight:700;transform:scaleX(0.9629);transform-origin:left;">Training Images</div>
<div class="t r" style="left:712.00px;top:331.74px;font-size:10px;line-height:10px;color:#eeeff3;font-weight:400;transform:scaleX(0.9768);transform-origin:left;">854</div>
<div class="t" style="left:712.00px;top:351.95px;font-size:8.8px;line-height:8.8px;color:#a9b4ec;font-weight:700;transform:scaleX(0.9582);transform-origin:left;">Trained Classes</div>
<div class="t r" style="left:712.00px;top:363.64px;font-size:10px;line-height:10px;color:#eeeff3;font-weight:400;">14</div>
<div class="t" style="left:712.20px;top:392.24px;font-size:12px;line-height:12px;color:#a9b4ec;font-weight:700;transform:scaleX(0.9815);transform-origin:left;">Build Options</div>
<div class="t" style="left:712.00px;top:410.75px;font-size:8.8px;line-height:8.8px;color:#a9b4ec;font-weight:700;transform:scaleX(0.9920);transform-origin:left;">Duration of Optimization</div>
<div class="t r" style="left:712.00px;top:423.14px;font-size:10px;line-height:10px;color:#eeeff3;font-weight:400;transform:scaleX(1.0184);transform-origin:left;">Thorough</div>
<div class="t" style="left:712.00px;top:442.95px;font-size:8.8px;line-height:8.8px;color:#a9b4ec;font-weight:700;transform:scaleX(0.9596);transform-origin:left;">Occurrence of False Positives</div>
<div class="t r" style="left:712.00px;top:455.04px;font-size:10px;line-height:10px;color:#eeeff3;font-weight:400;">Highest Average Accuracy</div>
<div class="t r" style="left:711.70px;top:524.30px;font-size:15px;line-height:15px;color:#f2f2f6;font-weight:400;transform:scaleX(1.0316);transform-origin:left;-webkit-text-stroke:0.45px currentColor;">Rebuild your Static Classifier</div>
<div class="t r" style="left:711.70px;top:548.63px;font-size:10px;line-height:10px;color:#d6d7e0;font-weight:400;">Have you made changes to your Learning Classifier? Do</div>
<div class="t r" style="left:711.70px;top:561.24px;font-size:10px;line-height:10px;color:#d6d7e0;font-weight:400;transform:scaleX(1.0457);transform-origin:left;">you want to try different build options on the same</div>
<div class="t r" style="left:711.70px;top:573.84px;font-size:10px;line-height:10px;color:#d6d7e0;font-weight:400;">dataset? Simple, rebuild your Static Classifier.</div>
<div style="left:711.8px;top:633.2px;width:158.2px;height:23.9px;background:#1f2133;border:2px solid #2b9fb3;border-radius:12px;"></div>
<div class="t" style="left:726.00px;top:639.81px;font-size:11.8px;line-height:11.8px;color:#f4f4f6;font-weight:700;transform:scaleX(0.9581);transform-origin:left;">Rebuild Static Classifier</div>
<div class="t r" style="left:165.90px;top:719.90px;font-size:15px;line-height:15px;color:#eeeff3;font-weight:400;transform:scaleX(1.0447);transform-origin:left;-webkit-text-stroke:0.45px currentColor;">Validation Images</div>
<svg style="left:931.5px;top:721px;" width="15" height="11" viewBox="0 0 15 11"><rect x="0.8" y="0.3" width="5.7" height="1.5" fill="#f0f0f4"/><rect x="0.8" y="3.1" width="5.7" height="1.5" fill="#f0f0f4"/><rect x="0.8" y="5.9" width="5.7" height="1.5" fill="#f0f0f4"/><rect x="0.8" y="8.7" width="5.7" height="1.5" fill="#f0f0f4"/><rect x="8.3" y="0.3" width="5.5" height="9.9" rx="0.6" fill="#f4f4f6"/></svg>
<svg style="left:962.6px;top:718.6px;" width="18" height="16" viewBox="0 0 18 16"><rect x="2" y="1.8" width="14" height="11.3" rx="1.6" fill="none" stroke="#f0f0f4" stroke-width="1.6"/><path d="M5 7V5.8Q5 4.6 6.4 4.6H7.2M13 7.9V9.1Q13 10.3 11.6 10.3H10.8" fill="none" stroke="#f0f0f4" stroke-width="1.3"/></svg>
<div class="t" style="left:165.90px;top:749.73px;font-size:9.3px;line-height:9.3px;color:#eeeff3;font-weight:700;transform:scaleX(0.9042);transform-origin:left;">Result</div>
<div class="t" style="left:283.80px;top:749.73px;font-size:9.3px;line-height:9.3px;color:#eeeff3;font-weight:700;transform:scaleX(0.8383);transform-origin:left;">Class</div>
<div style="left:165.9px;top:761px;width:104.2px;height:21px;background:#10121b;border:1px solid #c8c9d0;"></div>
<div class="t r" style="left:173.60px;top:767.80px;font-size:8.5px;line-height:8.5px;color:#d6d7e0;font-weight:400;transform:scaleX(1.0261);transform-origin:left;">All</div>
<svg style="left:255.60000000000002px;top:768.5px;" width="10" height="7" viewBox="0 0 10 7"><path d="M1 1L5 5L9 1" fill="none" stroke="#f0f0f4" stroke-width="1.4"/></svg>
<div style="left:283.8px;top:761px;width:104.4px;height:21px;background:#10121b;border:1px solid #c8c9d0;"></div>
<div class="t r" style="left:291.50px;top:767.80px;font-size:8.5px;line-height:8.5px;color:#d6d7e0;font-weight:400;transform:scaleX(1.0261);transform-origin:left;">All</div>
<svg style="left:373.70000000000005px;top:768.5px;" width="10" height="7" viewBox="0 0 10 7"><path d="M1 1L5 5L9 1" fill="none" stroke="#f0f0f4" stroke-width="1.4"/></svg>
<svg style="left:850.5px;top:765.5px;" width="13" height="13.5" viewBox="0 0 13 13.5"><rect x="0.5" y="0.3" width="2.3" height="12.9" fill="#f0f0f4"/><path d="M12.3 0.3V13.2L3.2 6.75Z" fill="#f0f0f4"/></svg>
<svg style="left:875px;top:766px;" width="9" height="13" viewBox="0 0 9 13"><path d="M7.5 1L2 6.5L7.5 12" fill="none" stroke="#f0f0f4" stroke-width="1.6"/></svg>
<div style="left:893.1px;top:762.2px;width:19.9px;height:19.9px;background:#262a3f;border:1px solid #bfc0c8;border-radius:3px;"></div>
<div class="t r" style="left:900.49px;top:768.38px;font-size:9px;line-height:9px;color:#e6e6ea;font-weight:400;">1</div>
<div class="t r" style="left:918.60px;top:768.83px;font-size:8px;line-height:8px;color:#d0d1d8;font-weight:400;transform:scaleX(0.9833);transform-origin:left;">of 25</div>
<svg style="left:945.5px;top:766px;" width="9" height="13" viewBox="0 0 9 13"><path d="M1.5 1L7 6.5L1.5 12" fill="none" stroke="#f0f0f4" stroke-width="1.6"/></svg>
<svg style="left:966px;top:765.5px;" width="13" height="13.5" viewBox="0 0 13 13.5"><path d="M0.7 0.3V13.2L9.8 6.75Z" fill="#f0f0f4"/><rect x="10.2" y="0.3" width="2.3" height="12.9" fill="#f0f0f4"/></svg>
<div style="left:166px;top:799px;width:115px;height:18px;background:#292c43;"></div>
<svg style="left:171px;top:804px;" width="9" height="9" viewBox="0 0 9 9"><path d="M0.9 0.6L7.5 7.2M7.5 0.6L0.9 7.2" stroke="#e05a30" stroke-width="1.3"/></svg>
<svg style="left:166px;top:817px" width="115" height="83"><defs><linearGradient id="g00" x1="0" x2="1"><stop offset="0" stop-color="rgb(176,176,176)"/><stop offset="0.35" stop-color="rgb(166,166,166)"/><stop offset="0.7" stop-color="rgb(144,144,144)"/><stop offset="1" stop-color="rgb(138,138,138)"/></linearGradient><filter id="b00" x="0" y="0" width="100%" height="100%" color-interpolation-filters="sRGB"><feTurbulence type="fractalNoise" baseFrequency="0.3" numOctaves="5" seed="18"/><feColorMatrix type="matrix" values="0.75 0 0 0 0.125  0.75 0 0 0 0.125  0.75 0 0 0 0.125  0 0 0 0 1" result="n"/><feBlend in="n" in2="SourceGraphic" mode="overlay"/></filter></defs><rect width="115" height="83" fill="url(#g00)" filter="url(#b00)"/></svg>
<div style="left:166px;top:900px;width:115px;height:18px;background:#292c43;"></div>
<div style="left:171.8px;top:906.2px;width:7px;height:7.3px;background:#f0608f;"></div>
<div class="t r" style="left:184.30px;top:905.81px;font-size:9.2px;line-height:9.2px;color:#d6d7e0;font-weight:400;transform:scaleX(0.8877);transform-origin:left;">Class B</div>
<div style="left:306px;top:799px;width:115px;height:18px;background:#292c43;"></div>
<svg style="left:310px;top:804px;" width="10" height="8" viewBox="0 0 10 8"><path d="M1.1 3.3L3.7 5.5L8.1 0.7" fill="none" stroke="#1f9a2c" stroke-width="1.3"/></svg>
<svg style="left:306px;top:817px" width="115" height="83"><defs><linearGradient id="g01" x1="0" x2="1"><stop offset="0" stop-color="rgb(166,166,166)"/><stop offset="0.3" stop-color="rgb(164,164,164)"/><stop offset="0.45" stop-color="rgb(144,144,144)"/><stop offset="0.7" stop-color="rgb(161,161,161)"/><stop offset="1" stop-color="rgb(166,166,166)"/></linearGradient><filter id="b01" x="0" y="0" width="100%" height="100%" color-interpolation-filters="sRGB"><feTurbulence type="fractalNoise" baseFrequency="0.3" numOctaves="5" seed="31"/><feColorMatrix type="matrix" values="0.75 0 0 0 0.125  0.75 0 0 0 0.125  0.75 0 0 0 0.125  0 0 0 0 1" result="n"/><feBlend in="n" in2="SourceGraphic" mode="overlay"/></filter></defs><rect width="115" height="83" fill="url(#g01)" filter="url(#b01)"/></svg>
<div style="left:306px;top:900px;width:115px;height:18px;background:#292c43;"></div>
<div style="left:311.8px;top:906.2px;width:7px;height:7.3px;background:#2f6cf6;"></div>
<div class="t r" style="left:324.30px;top:905.81px;font-size:9.2px;line-height:9.2px;color:#d6d7e0;font-weight:400;transform:scaleX(0.9019);transform-origin:left;">Class A</div>
<div style="left:446px;top:799px;width:115px;height:18px;background:#292c43;"></div>
<svg style="left:450px;top:804px;" width="10" height="8" viewBox="0 0 10 8"><path d="M1.1 3.3L3.7 5.5L8.1 0.7" fill="none" stroke="#1f9a2c" stroke-width="1.3"/></svg>
<svg style="left:446px;top:817px" width="115" height="83"><defs><linearGradient id="g02" x1="0" x2="1"><stop offset="0" stop-color="rgb(138,138,138)"/><stop offset="0.3" stop-color="rgb(151,151,151)"/><stop offset="0.55" stop-color="rgb(178,178,178)"/><stop offset="1" stop-color="rgb(156,156,156)"/></linearGradient><filter id="b02" x="0" y="0" width="100%" height="100%" color-interpolation-filters="sRGB"><feTurbulence type="fractalNoise" baseFrequency="0.3" numOctaves="5" seed="44"/><feColorMatrix type="matrix" values="0.75 0 0 0 0.125  0.75 0 0 0 0.125  0.75 0 0 0 0.125  0 0 0 0 1" result="n"/><feBlend in="n" in2="SourceGraphic" mode="overlay"/></filter></defs><rect width="115" height="83" fill="url(#g02)" filter="url(#b02)"/></svg>
<div style="left:446px;top:900px;width:115px;height:18px;background:#292c43;"></div>
<div style="left:451.8px;top:906.2px;width:7px;height:7.3px;background:#f0608f;"></div>
<div class="t r" style="left:464.30px;top:905.81px;font-size:9.2px;line-height:9.2px;color:#d6d7e0;font-weight:400;transform:scaleX(0.8877);transform-origin:left;">Class B</div>
<div style="left:586px;top:799px;width:115px;height:18px;background:#292c43;"></div>
<svg style="left:591px;top:804px;" width="9" height="9" viewBox="0 0 9 9"><path d="M0.9 0.6L7.5 7.2M7.5 0.6L0.9 7.2" stroke="#e05a30" stroke-width="1.3"/></svg>
<svg style="left:586px;top:817px" width="115" height="83"><defs><linearGradient id="g03" x1="0" x2="1"><stop offset="0" stop-color="rgb(176,176,176)"/><stop offset="0.35" stop-color="rgb(166,166,166)"/><stop offset="0.7" stop-color="rgb(144,144,144)"/><stop offset="1" stop-color="rgb(138,138,138)"/></linearGradient><filter id="b03" x="0" y="0" width="100%" height="100%" color-interpolation-filters="sRGB"><feTurbulence type="fractalNoise" baseFrequency="0.3" numOctaves="5" seed="18"/><feColorMatrix type="matrix" values="0.75 0 0 0 0.125  0.75 0 0 0 0.125  0.75 0 0 0 0.125  0 0 0 0 1" result="n"/><feBlend in="n" in2="SourceGraphic" mode="overlay"/></filter></defs><rect width="115" height="83" fill="url(#g03)" filter="url(#b03)"/></svg>
<div style="left:586px;top:900px;width:115px;height:18px;background:#292c43;"></div>
<div style="left:591.8px;top:906.2px;width:7px;height:7.3px;background:#f0608f;"></div>
<div class="t r" style="left:604.30px;top:905.81px;font-size:9.2px;line-height:9.2px;color:#d6d7e0;font-weight:400;transform:scaleX(0.8877);transform-origin:left;">Class B</div>
<div style="left:726px;top:799px;width:115px;height:18px;background:#292c43;"></div>
<svg style="left:730px;top:804px;" width="10" height="8" viewBox="0 0 10 8"><path d="M1.1 3.3L3.7 5.5L8.1 0.7" fill="none" stroke="#1f9a2c" stroke-width="1.3"/></svg>
<svg style="left:726px;top:817px" width="115" height="83"><defs><linearGradient id="g04" x1="0" x2="1"><stop offset="0" stop-color="rgb(166,166,166)"/><stop offset="0.3" stop-color="rgb(164,164,164)"/><stop offset="0.45" stop-color="rgb(144,144,144)"/><stop offset="0.7" stop-color="rgb(161,161,161)"/><stop offset="1" stop-color="rgb(166,166,166)"/></linearGradient><filter id="b04" x="0" y="0" width="100%" height="100%" color-interpolation-filters="sRGB"><feTurbulence type="fractalNoise" baseFrequency="0.3" numOctaves="5" seed="31"/><feColorMatrix type="matrix" values="0.75 0 0 0 0.125  0.75 0 0 0 0.125  0.75 0 0 0 0.125  0 0 0 0 1" result="n"/><feBlend in="n" in2="SourceGraphic" mode="overlay"/></filter></defs><rect width="115" height="83" fill="url(#g04)" filter="url(#b04)"/></svg>
<div style="left:726px;top:900px;width:115px;height:18px;background:#292c43;"></div>
<div style="left:731.8px;top:906.2px;width:7px;height:7.3px;background:#2f6cf6;"></div>
<div class="t r" style="left:744.30px;top:905.81px;font-size:9.2px;line-height:9.2px;color:#d6d7e0;font-weight:400;transform:scaleX(0.9019);transform-origin:left;">Class A</div>
<div style="left:866px;top:799px;width:115px;height:18px;background:#292c43;"></div>
<svg style="left:870px;top:804px;" width="10" height="8" viewBox="0 0 10 8"><path d="M1.1 3.3L3.7 5.5L8.1 0.7" fill="none" stroke="#1f9a2c" stroke-width="1.3"/></svg>
<svg style="left:866px;top:817px" width="115" height="83"><defs><linearGradient id="g05" x1="0" x2="1"><stop offset="0" stop-color="rgb(138,138,138)"/><stop offset="0.3" stop-color="rgb(151,151,151)"/><stop offset="0.55" stop-color="rgb(178,178,178)"/><stop offset="1" stop-color="rgb(156,156,156)"/></linearGradient><filter id="b05" x="0" y="0" width="100%" height="100%" color-interpolation-filters="sRGB"><feTurbulence type="fractalNoise" baseFrequency="0.3" numOctaves="5" seed="44"/><feColorMatrix type="matrix" values="0.75 0 0 0 0.125  0.75 0 0 0 0.125  0.75 0 0 0 0.125  0 0 0 0 1" result="n"/><feBlend in="n" in2="SourceGraphic" mode="overlay"/></filter></defs><rect width="115" height="83" fill="url(#g05)" filter="url(#b05)"/></svg>
<div style="left:866px;top:900px;width:115px;height:18px;background:#292c43;"></div>
<div style="left:871.8px;top:906.2px;width:7px;height:7.3px;background:#f0608f;"></div>
<div class="t r" style="left:884.30px;top:905.81px;font-size:9.2px;line-height:9.2px;color:#d6d7e0;font-weight:400;transform:scaleX(0.8877);transform-origin:left;">Class B</div>
<div style="left:166px;top:934.3px;width:115px;height:18px;background:#292c43;"></div>
<svg style="left:170px;top:939.3px;" width="10" height="8" viewBox="0 0 10 8"><path d="M1.1 3.3L3.7 5.5L8.1 0.7" fill="none" stroke="#1f9a2c" stroke-width="1.3"/></svg>
<svg style="left:166px;top:952.3px" width="115" height="83"><defs><linearGradient id="g10" x1="0" x2="1"><stop offset="0" stop-color="rgb(118,118,118)"/><stop offset="0.2" stop-color="rgb(146,146,146)"/><stop offset="0.55" stop-color="rgb(178,178,178)"/><stop offset="0.75" stop-color="rgb(156,156,156)"/><stop offset="1" stop-color="rgb(154,154,154)"/></linearGradient><filter id="b10" x="0" y="0" width="100%" height="100%" color-interpolation-filters="sRGB"><feTurbulence type="fractalNoise" baseFrequency="0.3" numOctaves="5" seed="57"/><feColorMatrix type="matrix" values="0.75 0 0 0 0.125  0.75 0 0 0 0.125  0.75 0 0 0 0.125  0 0 0 0 1" result="n"/><feBlend in="n" in2="SourceGraphic" mode="overlay"/></filter></defs><rect width="115" height="83" fill="url(#g10)" filter="url(#b10)"/></svg>
<div style="left:166px;top:1035.3px;width:115px;height:18px;background:#292c43;"></div>
<div style="left:171.8px;top:1041.5px;width:7px;height:7.3px;background:#2a3aa8;"></div>
<div class="t r" style="left:184.30px;top:1041.11px;font-size:9.2px;line-height:9.2px;color:#d6d7e0;font-weight:400;transform:scaleX(0.8734);transform-origin:left;">Class C</div>
<div style="left:306px;top:934.3px;width:115px;height:18px;background:#292c43;"></div>
<svg style="left:310px;top:939.3px;" width="10" height="8" viewBox="0 0 10 8"><path d="M1.1 3.3L3.7 5.5L8.1 0.7" fill="none" stroke="#1f9a2c" stroke-width="1.3"/></svg>
<svg style="left:306px;top:952.3px" width="115" height="83"><defs><linearGradient id="g11" x1="0" x2="1"><stop offset="0" stop-color="rgb(154,154,154)"/><stop offset="0.6" stop-color="rgb(158,158,158)"/><stop offset="1" stop-color="rgb(168,168,168)"/></linearGradient><filter id="b11" x="0" y="0" width="100%" height="100%" color-interpolation-filters="sRGB"><feTurbulence type="fractalNoise" baseFrequency="0.3" numOctaves="5" seed="70"/><feColorMatrix type="matrix" values="0.75 0 0 0 0.125  0.75 0 0 0 0.125  0.75 0 0 0 0.125  0 0 0 0 1" result="n"/><feBlend in="n" in2="SourceGraphic" mode="overlay"/></filter></defs><rect width="115" height="83" fill="url(#g11)" filter="url(#b11)"/></svg>
<div style="left:306px;top:1035.3px;width:115px;height:18px;background:#292c43;"></div>
<div style="left:311.8px;top:1041.5px;width:7px;height:7.3px;background:#f0608f;"></div>
<div class="t r" style="left:324.30px;top:1041.11px;font-size:9.2px;line-height:9.2px;color:#d6d7e0;font-weight:400;transform:scaleX(0.8877);transform-origin:left;">Class B</div>
<div style="left:446px;top:934.3px;width:115px;height:18px;background:#292c43;"></div>
<svg style="left:450px;top:939.3px;" width="10" height="8" viewBox="0 0 10 8"><path d="M1.1 3.3L3.7 5.5L8.1 0.7" fill="none" stroke="#1f9a2c" stroke-width="1.3"/></svg>
<svg style="left:446px;top:952.3px" width="115" height="83"><defs><linearGradient id="g12" x1="0" x2="1"><stop offset="0" stop-color="rgb(124,124,124)"/><stop offset="0.3" stop-color="rgb(148,148,148)"/><stop offset="0.7" stop-color="rgb(174,174,174)"/><stop offset="1" stop-color="rgb(182,182,182)"/></linearGradient><filter id="b12" x="0" y="0" width="100%" height="100%" color-interpolation-filters="sRGB"><feTurbulence type="fractalNoise" baseFrequency="0.3" numOctaves="5" seed="83"/><feColorMatrix type="matrix" values="0.75 0 0 0 0.125  0.75 0 0 0 0.125  0.75 0 0 0 0.125  0 0 0 0 1" result="n"/><feBlend in="n" in2="SourceGraphic" mode="overlay"/></filter></defs><rect width="115" height="83" fill="url(#g12)" filter="url(#b12)"/></svg>
<div style="left:446px;top:1035.3px;width:115px;height:18px;background:#292c43;"></div>
<div style="left:451.8px;top:1041.5px;width:7px;height:7.3px;background:#22e03a;"></div>
<div class="t r" style="left:464.30px;top:1041.11px;font-size:9.2px;line-height:9.2px;color:#d6d7e0;font-weight:400;transform:scaleX(0.8734);transform-origin:left;">Class D</div>
<div style="left:586px;top:934.3px;width:115px;height:18px;background:#292c43;"></div>
<svg style="left:590px;top:939.3px;" width="10" height="8" viewBox="0 0 10 8"><path d="M1.1 3.3L3.7 5.5L8.1 0.7" fill="none" stroke="#1f9a2c" stroke-width="1.3"/></svg>
<svg style="left:586px;top:952.3px" width="115" height="83"><defs><linearGradient id="g13" x1="0" x2="1"><stop offset="0" stop-color="rgb(118,118,118)"/><stop offset="0.2" stop-color="rgb(146,146,146)"/><stop offset="0.55" stop-color="rgb(178,178,178)"/><stop offset="0.75" stop-color="rgb(156,156,156)"/><stop offset="1" stop-color="rgb(154,154,154)"/></linearGradient><filter id="b13" x="0" y="0" width="100%" height="100%" color-interpolation-filters="sRGB"><feTurbulence type="fractalNoise" baseFrequency="0.3" numOctaves="5" seed="57"/><feColorMatrix type="matrix" values="0.75 0 0 0 0.125  0.75 0 0 0 0.125  0.75 0 0 0 0.125  0 0 0 0 1" result="n"/><feBlend in="n" in2="SourceGraphic" mode="overlay"/></filter></defs><rect width="115" height="83" fill="url(#g13)" filter="url(#b13)"/></svg>
<div style="left:586px;top:1035.3px;width:115px;height:18px;background:#292c43;"></div>
<div style="left:591.8px;top:1041.5px;width:7px;height:7.3px;background:#2a3aa8;"></div>
<div class="t r" style="left:604.30px;top:1041.11px;font-size:9.2px;line-height:9.2px;color:#d6d7e0;font-weight:400;transform:scaleX(0.8734);transform-origin:left;">Class C</div>
<div style="left:726px;top:934.3px;width:115px;height:18px;background:#292c43;"></div>
<svg style="left:730px;top:939.3px;" width="10" height="8" viewBox="0 0 10 8"><path d="M1.1 3.3L3.7 5.5L8.1 0.7" fill="none" stroke="#1f9a2c" stroke-width="1.3"/></svg>
<svg style="left:726px;top:952.3px" width="115" height="83"><defs><linearGradient id="g14" x1="0" x2="1"><stop offset="0" stop-color="rgb(154,154,154)"/><stop offset="0.6" stop-color="rgb(158,158,158)"/><stop offset="1" stop-color="rgb(168,168,168)"/></linearGradient><filter id="b14" x="0" y="0" width="100%" height="100%" color-interpolation-filters="sRGB"><feTurbulence type="fractalNoise" baseFrequency="0.3" numOctaves="5" seed="70"/><feColorMatrix type="matrix" values="0.75 0 0 0 0.125  0.75 0 0 0 0.125  0.75 0 0 0 0.125  0 0 0 0 1" result="n"/><feBlend in="n" in2="SourceGraphic" mode="overlay"/></filter></defs><rect width="115" height="83" fill="url(#g14)" filter="url(#b14)"/></svg>
<div style="left:726px;top:1035.3px;width:115px;height:18px;background:#292c43;"></div>
<div style="left:731.8px;top:1041.5px;width:7px;height:7.3px;background:#f0608f;"></div>
<div class="t r" style="left:744.30px;top:1041.11px;font-size:9.2px;line-height:9.2px;color:#d6d7e0;font-weight:400;transform:scaleX(0.8877);transform-origin:left;">Class B</div>
<div style="left:866px;top:934.3px;width:115px;height:18px;background:#292c43;"></div>
<svg style="left:870px;top:939.3px;" width="10" height="8" viewBox="0 0 10 8"><path d="M1.1 3.3L3.7 5.5L8.1 0.7" fill="none" stroke="#1f9a2c" stroke-width="1.3"/></svg>
<svg style="left:866px;top:952.3px" width="115" height="83"><defs><linearGradient id="g15" x1="0" x2="1"><stop offset="0" stop-color="rgb(124,124,124)"/><stop offset="0.3" stop-color="rgb(148,148,148)"/><stop offset="0.7" stop-color="rgb(174,174,174)"/><stop offset="1" stop-color="rgb(182,182,182)"/></linearGradient><filter id="b15" x="0" y="0" width="100%" height="100%" color-interpolation-filters="sRGB"><feTurbulence type="fractalNoise" baseFrequency="0.3" numOctaves="5" seed="83"/><feColorMatrix type="matrix" values="0.75 0 0 0 0.125  0.75 0 0 0 0.125  0.75 0 0 0 0.125  0 0 0 0 1" result="n"/><feBlend in="n" in2="SourceGraphic" mode="overlay"/></filter></defs><rect width="115" height="83" fill="url(#g15)" filter="url(#b15)"/></svg>
<div style="left:866px;top:1035.3px;width:115px;height:18px;background:#292c43;"></div>
<div style="left:871.8px;top:1041.5px;width:7px;height:7.3px;background:#22e03a;"></div>
<div class="t r" style="left:884.30px;top:1041.11px;font-size:9.2px;line-height:9.2px;color:#d6d7e0;font-weight:400;transform:scaleX(0.8734);transform-origin:left;">Class D</div>
</body></html>
